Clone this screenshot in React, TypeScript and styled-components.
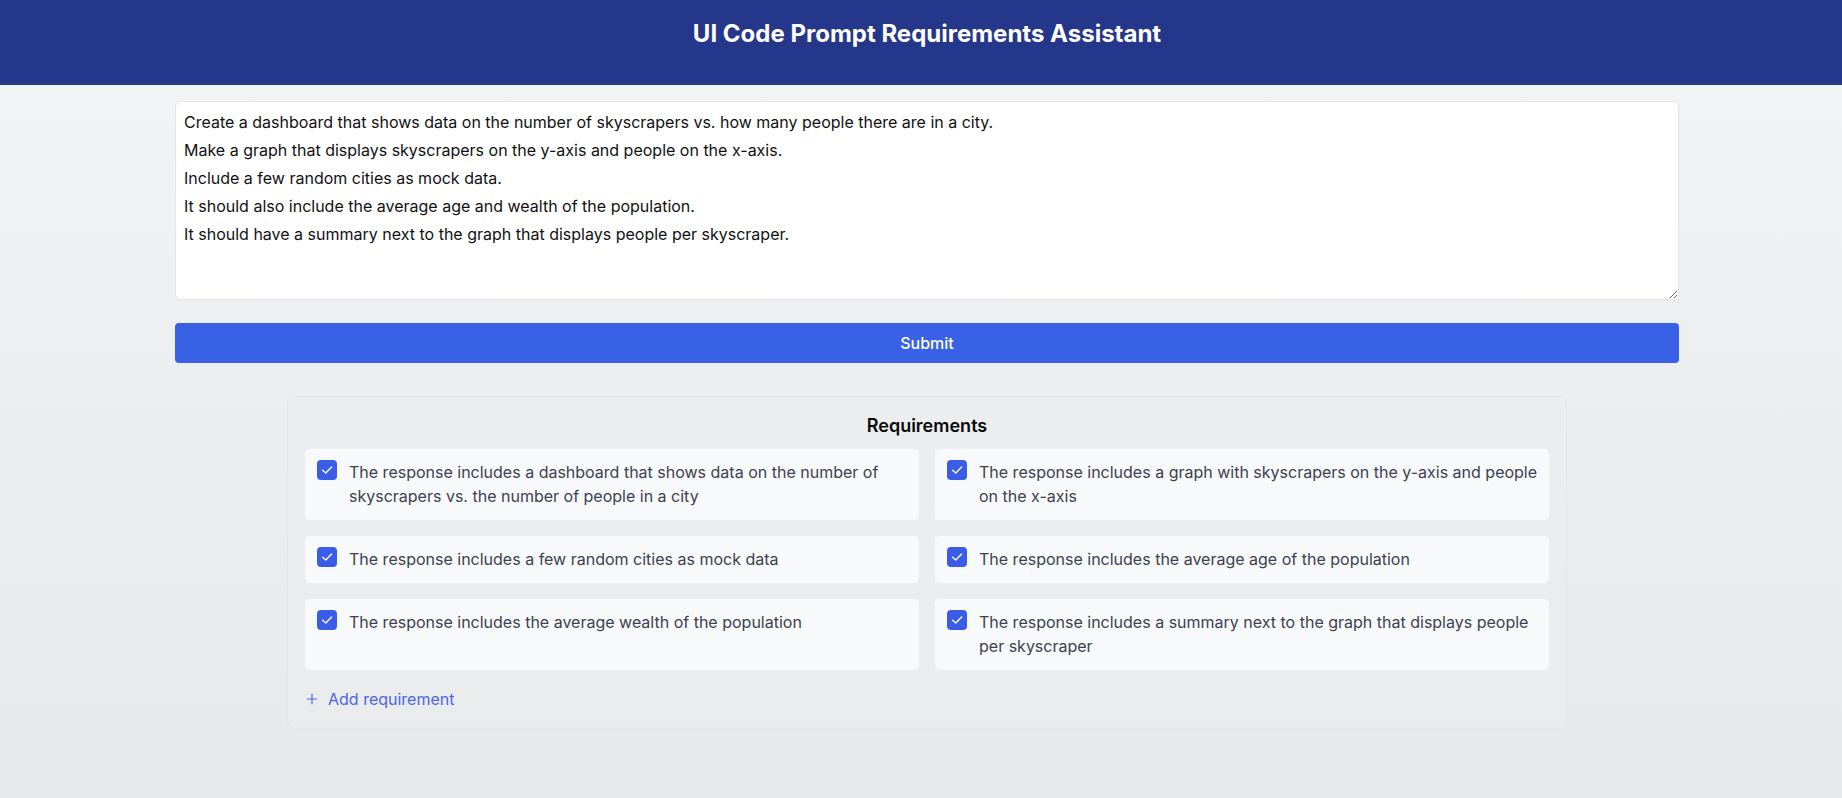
import React, { useState } from "react";
import styled, { createGlobalStyle } from "styled-components";
import { Plus } from "lucide-react";

const GlobalStyle = createGlobalStyle`
  * { box-sizing: border-box; }
  html, body { margin: 0; padding: 0; }
  body {
    font-family: Inter, "Noto Sans", "Liberation Sans", sans-serif;
    background: #f3f4f6;
  }
`;

const Page = styled.div`
  min-height: 100vh;
  background: linear-gradient(to bottom, #f3f4f6 0%, #e7e8eb 100%);
  display: flex;
  flex-direction: column;
`;

const Header = styled.header`
  background: #25378a;
  height: 85px;
  padding: 18px 0 0 12px;
  display: flex;
  justify-content: center;
  align-items: flex-start;
`;

const Title = styled.h1`
  margin: 0;
  color: #ffffff;
  font-size: 24px;
  line-height: 32px;
  font-weight: 700;
`;

const Main = styled.main`
  padding: 16px 163px 40px 175px;
  display: flex;
  flex-direction: column;
`;

const PromptInput = styled.textarea`
  display: block;
  width: 100%;
  height: 199px;
  padding: 6px 8px;
  border: 1px solid #e3e5e8;
  border-radius: 6px;
  background: #ffffff;
  color: #111111;
  font-family: Inter, "Noto Sans", "Liberation Sans", sans-serif;
  font-size: 16px;
  line-height: 28px;
  resize: vertical;
  outline: none;
`;

const SubmitButton = styled.button`
  margin-top: 23px;
  height: 40px;
  width: 100%;
  border: none;
  border-radius: 4px;
  background: #3861e6;
  color: #ffffff;
  font-family: Inter, "Noto Sans", "Liberation Sans", sans-serif;
  font-size: 16px;
  font-weight: 500;
  cursor: pointer;
`;

const Panel = styled.section`
  margin: 33px auto 0;
  width: 100%;
  max-width: 1280px;
  padding: 15px 16px 17px;
  border: 1px solid #e4e6e9;
  border-radius: 8px;
  background: rgba(235, 236, 239, 0.55);
`;

const PanelTitle = styled.h2`
  margin: 0 0 8px;
  text-align: center;
  font-size: 18px;
  line-height: 28px;
  font-weight: 600;
  color: #0b0b0b;
`;

const Grid = styled.div`
  display: grid;
  grid-template-columns: 1fr 1fr;
  gap: 14px;
`;

const Card = styled.label`
  display: flex;
  align-items: flex-start;
  gap: 12px;
  padding: 12px 10px 12px 12px;
  background: #f8f9fb;
  border: 1px solid #eceef1;
  border-radius: 6px;
  cursor: pointer;
`;

const Box = styled.span<{ $checked: boolean }>`
  flex: 0 0 20px;
  width: 20px;
  height: 20px;
  margin-top: -1px;
  border-radius: 4px;
  background: ${(p) => (p.$checked ? "#3a5ce6" : "#ffffff")};
  border: ${(p) => (p.$checked ? "none" : "1px solid #9ca3af")};
  display: flex;
  align-items: center;
  justify-content: center;
`;

const CardText = styled.span`
  font-size: 16px;
  line-height: 24px;
  color: #3b4250;
  margin-top: -1px;
`;

const AddButton = styled.button`
  margin-top: 16px;
  display: inline-flex;
  align-items: center;
  gap: 8px;
  padding: 0;
  border: none;
  background: none;
  color: #4a66e4;
  font-family: Inter, "Noto Sans", "Liberation Sans", sans-serif;
  font-size: 16px;
  line-height: 24px;
  cursor: pointer;
`;

const prompt = `Create a dashboard that shows data on the number of skyscrapers vs. how many people there are in a city.
Make a graph that displays skyscrapers on the y-axis and people on the x-axis.
Include a few random cities as mock data.
It should also include the average age and wealth of the population.
It should have a summary next to the graph that displays people per skyscraper.`;

const initialReqs = [
  "The response includes a dashboard that shows data on the number of skyscrapers vs. the number of people in a city",
  "The response includes a graph with skyscrapers on the y-axis and people on the x-axis",
  "The response includes a few random cities as mock data",
  "The response includes the average age of the population",
  "The response includes the average wealth of the population",
  "The response includes a summary next to the graph that displays people per skyscraper",
];

const Check = () => (
  <svg width="20" height="20" viewBox="0 0 20 20" fill="none">
    <path d="M5.6 10.2 L8.8 13 L14.6 7" stroke="#ffffff" strokeWidth="1.4" strokeLinecap="round" strokeLinejoin="round" />
  </svg>
);

export default function App() {
  const [text, setText] = useState(prompt);
  const [checked, setChecked] = useState<boolean[]>(initialReqs.map(() => true));

  return (
    <>
      <GlobalStyle />
      <Page>
        <Header>
          <Title>UI Code Prompt Requirements Assistant</Title>
        </Header>
        <Main>
          <PromptInput value={text} onChange={(e) => setText(e.target.value)} />
          <SubmitButton>Submit</SubmitButton>
          <Panel>
            <PanelTitle>Requirements</PanelTitle>
            <Grid>
              {initialReqs.map((r, i) => (
                <Card
                  key={i}
                  onClick={(e) => {
                    e.preventDefault();
                    setChecked((c) => c.map((v, j) => (j === i ? !v : v)));
                  }}
                >
                  <Box $checked={checked[i]}>{checked[i] && <Check />}</Box>
                  <CardText>{r}</CardText>
                </Card>
              ))}
            </Grid>
            <AddButton>
              <Plus size={16} strokeWidth={1.75} />
              Add requirement
            </AddButton>
          </Panel>
        </Main>
      </Page>
    </>
  );
}
